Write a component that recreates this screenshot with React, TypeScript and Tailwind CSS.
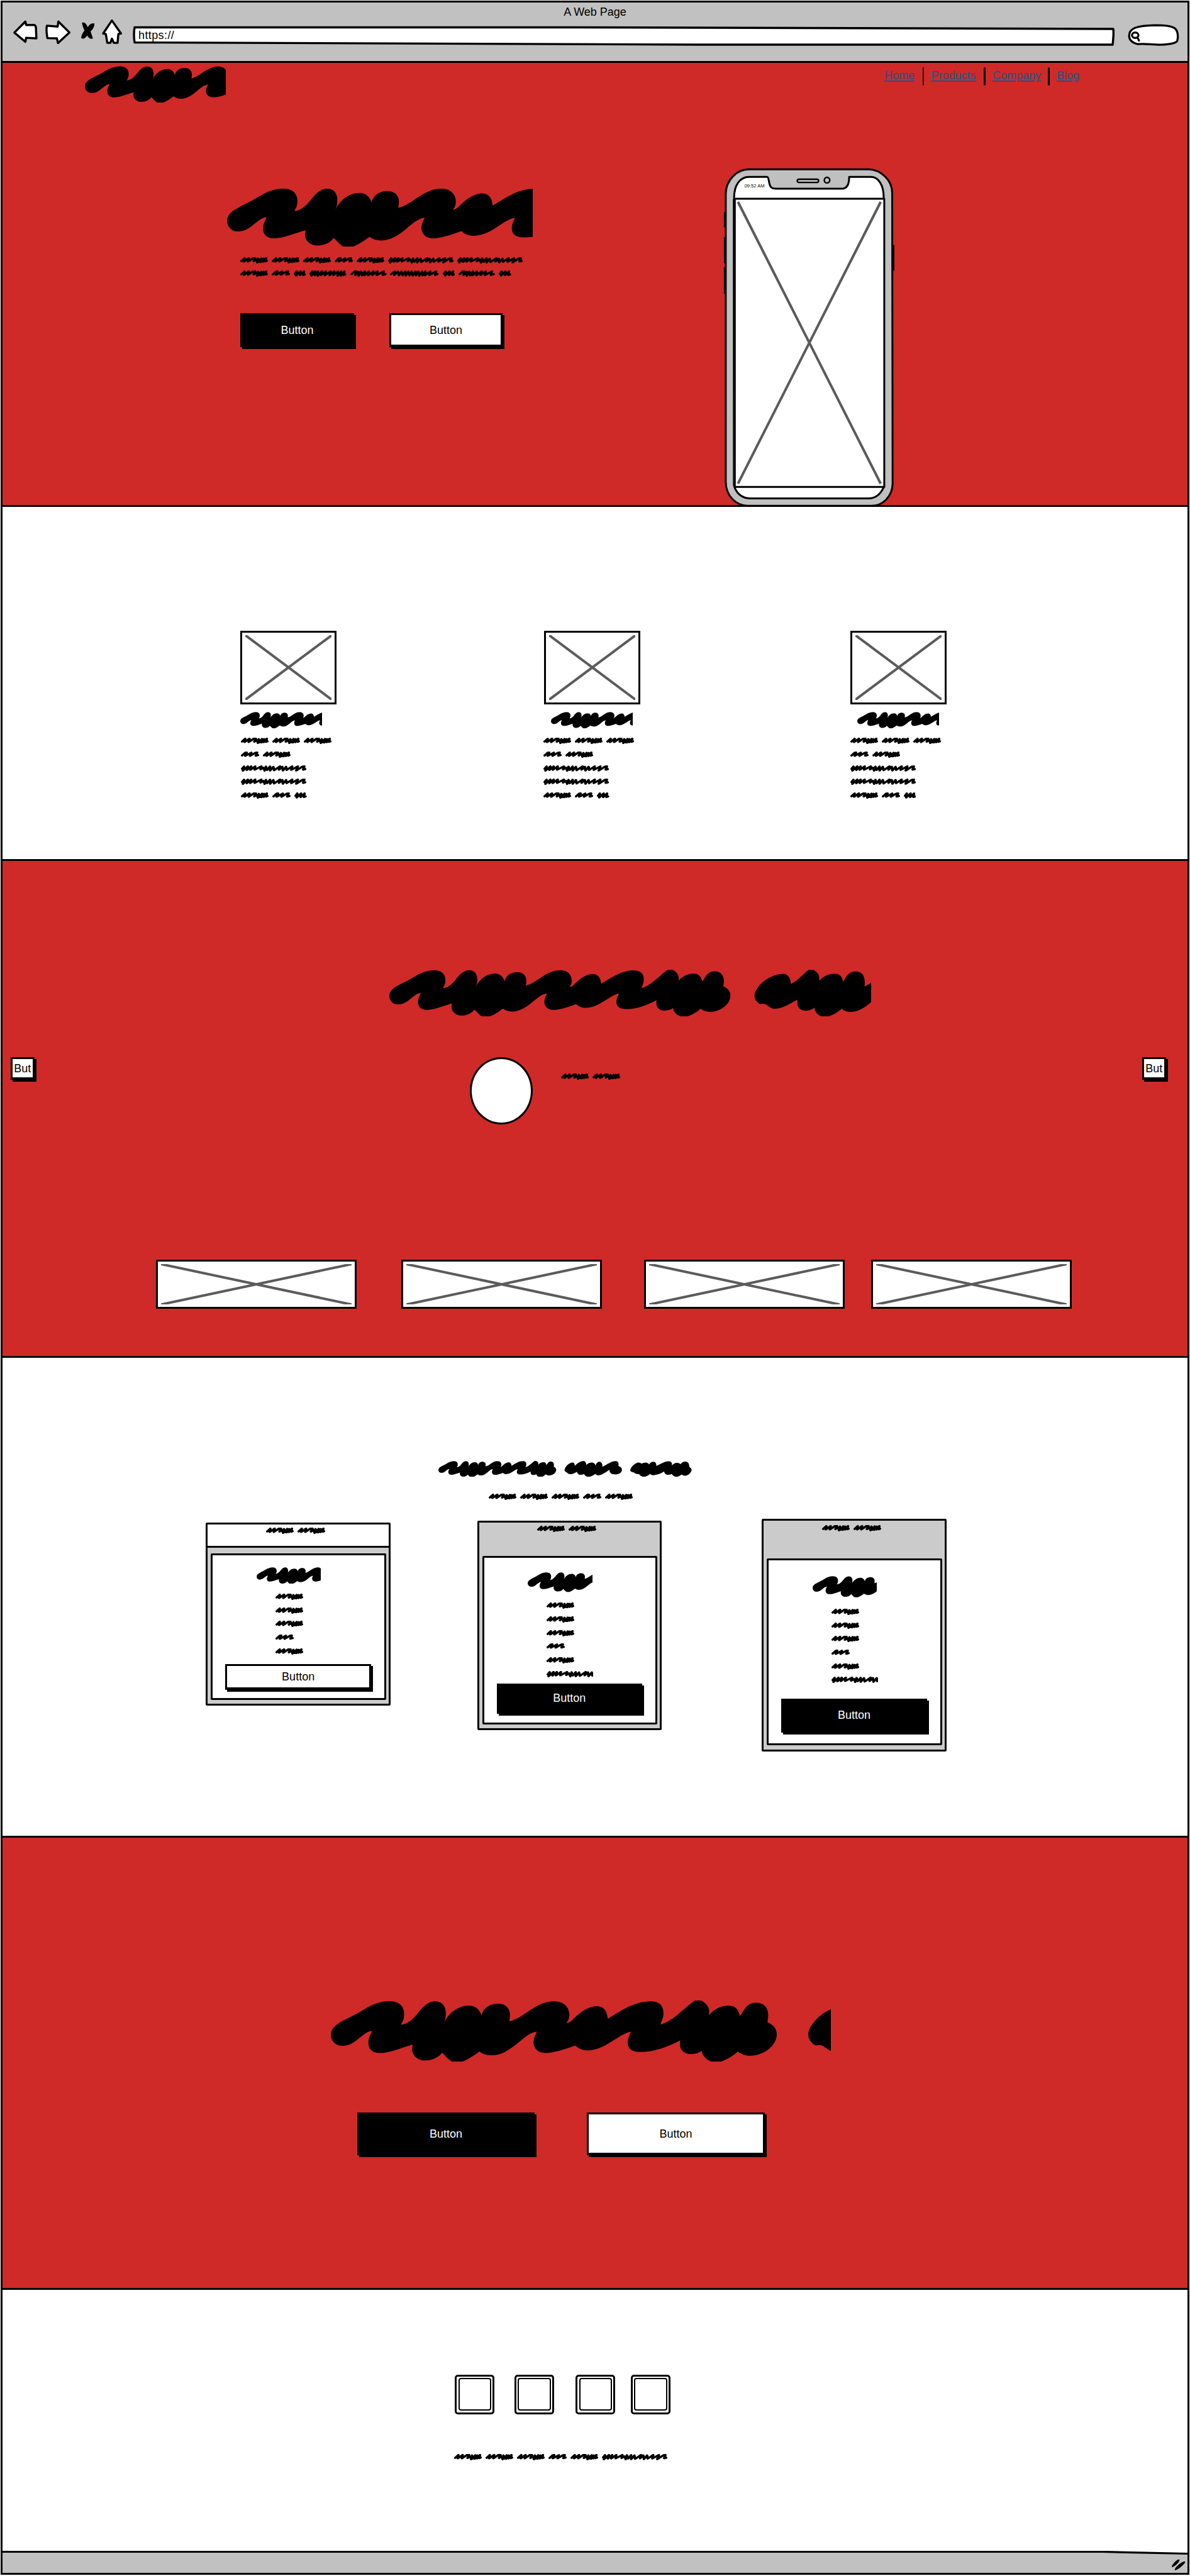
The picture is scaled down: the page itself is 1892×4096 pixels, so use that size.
import React from "react";

/* Long headline scribble, clipped on the right by its text box. */
const HEADLINE =
  "M33 345C33 300 50 270 75 240C90 222 110 200 130 170C155 132 180 112 205 112C240 112 248 165 248 200C248 235 244 255 238 275C255 275 270 245 285 205C300 160 315 113 340 113C360 113 370 150 370 195C370 230 367 250 364 270C375 200 405 143 438 143C458 143 470 175 475 215C478 160 500 130 523 130C548 130 558 170 558 205C558 225 557 240 556 252C580 240 600 200 620 170C645 132 665 113 688 113C720 113 732 165 732 205C732 235 728 252 723 264C735 266 742 235 758 205C775 170 795 147 812 147C835 147 842 185 845 235C865 205 885 175 905 152C930 125 950 114 970 114C1000 114 1008 155 1008 195C1008 230 1002 252 999 275C1025 258 1045 215 1065 175C1080 143 1092 120 1100 108L1118 108C1135 128 1142 155 1142 185L1141 210C1155 168 1178 143 1199 143C1220 143 1228 175 1232 216C1240 190 1245 165 1252 148C1260 128 1270 123 1280 123C1305 123 1315 165 1315 210C1315 230 1313 245 1313 260C1330 275 1340 305 1340 342C1340 425 1300 492 1262 492C1248 492 1235 480 1226 462C1210 495 1192 522 1174 534L1150 534C1132 520 1122 490 1120 458C1112 472 1100 480 1088 480C1065 480 1056 445 1056 410L1057 385C1020 432 980 466 940 466C912 466 903 435 903 400C903 370 909 345 913 324C895 330 875 365 855 395C830 433 808 455 786 455C770 455 758 440 749 421C715 450 685 473 662 473C638 473 627 435 627 398C627 370 633 345 637 324C615 330 598 370 580 405C555 455 530 489 505 489C490 489 478 480 468 462C450 495 430 525 416 534L390 534C378 522 370 495 359 470C350 503 330 525 310 525C285 525 271 485 271 445L273 414C235 440 205 473 177 473C150 473 143 435 143 400C143 370 149 345 154 319C138 320 120 365 105 390C92 413 80 423 66 423C45 423 33 385 33 345Z";

const HEADLINE_TAIL =
  "M1160 323C1160 260 1205 170 1246 170C1262 170 1269 200 1270 240C1290 220 1305 175 1324 142L1338 142C1350 158 1356 175 1356 200L1356 220C1366 188 1385 169 1402 169C1420 169 1426 195 1428 226C1436 200 1442 154 1466 154C1490 154 1496 195 1493 258C1500 252 1507 242 1513 232V366C1495 405 1472 435 1452 435C1440 435 1430 428 1424 413C1410 440 1395 460 1382 467L1364 467C1352 458 1342 435 1341 404C1335 418 1325 426 1314 426C1295 426 1287 395 1290 350C1265 380 1245 413 1221 413C1205 413 1198 376 1184 378L1177 381C1168 370 1160 350 1160 323Z";

function Headline({ span, className }: { span: number; className: string }) {
  return (
    <svg viewBox={`33 108 ${span} 426`} preserveAspectRatio="none" className={`block shrink-0 overflow-hidden ${className}`}>
      <path d={HEADLINE} />
      <path d={HEADLINE_TAIL} transform="translate(33 108) scale(1.2653 1.3108) translate(-54 -142)" />
    </svg>
  );
}

type WordKind = "A" | "B" | "C" | "D" | "E" | "F" | "G";

const WORDS: Record<WordKind, { x: number; y: number; w: number; d: string }> = {
  A: { x: 137, y: 684, w: 168, d: "M144 711L163 691L159 714L189 691L184 714L215 691L228 691L218 712L234 700L240 721L246 694L252 716L265 693L262 717L278 694L276 715L294 691L290 713L298 709" },
  B: { x: 708, y: 684, w: 111, d: "M715 712L734 692L743 691L734 714L771 692L763 714L797 692L807 691L798 713L812 709" },
  C: { x: 1031, y: 684, w: 397, d: "M1038 708L1050 692L1043 721L1073 691L1067 716L1093 691L1088 715L1118 691L1114 714L1155 691L1150 712L1168 700L1175 721L1183 693L1190 716L1208 692L1208 720L1228 694L1232 718L1268 691L1262 714L1282 694L1285 720L1305 694L1308 716L1342 691L1336 715L1376 691L1366 720L1405 692L1416 691L1408 714L1421 710" },
  D: { x: 0, y: 0, w: 75, d: "M7 24L18 7L14 36L41 7L38 32L62 7L58 32L68 28" },
  E: { x: 0, y: 0, w: 223, d: "M7 24L18 7L12 36L34 7L32 34L52 7L50 37L75 7L70 32L100 7L93 34L128 7L122 34L150 7L146 32L172 8L170 37L192 8L190 36L212 7L208 32L216 28" },
  F: { x: 0, y: 0, w: 220, d: "M7 26L28 7L36 7L30 32L50 10L50 37L66 8L70 34L88 7L84 34L112 8L108 34L140 7L133 32L165 7L160 32L202 7L196 31L213 26" },
  G: { x: 0, y: 0, w: 295, d: "M7 26L30 7L26 32L50 9L55 34L70 8L76 34L92 8L96 36L112 8L118 34L132 8L138 36L155 8L158 34L172 8L178 37L195 8L198 34L215 8L212 34L245 7L238 32L280 7L274 31L288 26" },
};

const WORD_WIDTH: Record<WordKind, string> = {
  A: "w-[44.1px]",
  B: "w-[29.1px]",
  C: "w-[104.2px]",
  D: "w-[19.7px]",
  E: "w-[58.5px]",
  F: "w-[57.8px]",
  G: "w-[77.4px]",
};

function Line({ words }: { words: string }) {
  return (
    <div className="flex h-[10px] gap-[5.9px]">
      {words.split("").map((k, i) => {
        const word = WORDS[k as WordKind];
        return (
          <svg key={i} viewBox={`${word.x} ${word.y} ${word.w} 44`} preserveAspectRatio="none" className={`block h-[10px] shrink-0 ${WORD_WIDTH[k as WordKind]}`}>
            <path d={word.d} fill="none" stroke="#000" strokeWidth="14.5" strokeLinecap="round" strokeLinejoin="round" />
          </svg>
        );
      })}
    </div>
  );
}

function Lines({ rows, className = "" }: { rows: string[]; className?: string }) {
  return (
    <div className={`flex flex-col gap-[11.7px] ${className}`}>
      {rows.map((r, i) => (
        <Line key={i} words={r} />
      ))}
    </div>
  );
}

function Button({ dark = false, className, label = "Button" }: { dark?: boolean; className: string; label?: string }) {
  return (
    <button
      className={`flex shrink-0 items-center justify-center border-[3px] border-b-4 border-black text-[18px] leading-none shadow-[3px_3px_0_0_#000] ${dark ? "bg-black text-white" : "bg-white text-black"} ${className}`}
    >
      {label}
    </button>
  );
}

function Placeholder({ className }: { className: string }) {
  return (
    <div className={`shrink-0 border-[3px] border-black bg-white px-[5px] py-[4px] ${className}`}>
      <svg viewBox="0 0 100 100" preserveAspectRatio="none" className="block h-full w-full">
        <path d="M0 0L100 100M100 0L0 100" fill="none" stroke="#5b5b5b" strokeWidth="4" vectorEffect="non-scaling-stroke" />
      </svg>
    </div>
  );
}

function BrowserBar() {
  return (
    <header className="h-[96px] shrink-0 border-b-[3px] border-black bg-[#c1c1c1]">
      <div className="h-[26px] text-center text-[18px] leading-[30px]">A Web Page</div>
      <div className="flex items-start">
        <svg viewBox="30 135 295 170" preserveAspectRatio="none" className="mt-[1px] ml-[14px] h-[39px] w-[178px] shrink-0">
          <g fill="#fff" stroke="#000" strokeWidth="3.4" strokeLinejoin="round">
            <path vectorEffect="non-scaling-stroke" d="M38 226L67 149L69 173L90 173Q95 175 95 200L96 266L69 262L67 290Z" />
            <path vectorEffect="non-scaling-stroke" d="M183 225L154 149L152 184L124 178Q121 200 125 264L150 266L153 298Z" />
            <path vectorEffect="non-scaling-stroke" d="M295 142L272 232L279 236L283 297L291 297L295 268L300 297L310 297L312 236L319 232Z" />
          </g>
          <path d="M216 158Q223 150 229 175Q232 196 238 212Q242 240 245 266Q238 276 231 250Q220 210 216 158Z" />
          <path d="M249 163Q242 156 236 172Q228 200 224 208Q215 235 214 262Q220 276 227 256Q234 230 241 212Q249 190 249 163Z" />
        </svg>
        <div className="relative mt-[12px] ml-[15px] h-[30px] w-[1561px] shrink-0 pl-[9px] text-[18px] leading-[28px] tracking-[0.4px]">
          <svg viewBox="0 0 1561 30" className="absolute inset-0 h-[30px] w-[1561px] overflow-visible">
            <path d="M3 1.5L700 1.5Q1200 2 1559 4Q1560 12 1558 29L900 29Q400 28 3 25.5Q1 13 3 1.5Z" fill="#fff" stroke="#000" strokeWidth="3.4" strokeLinejoin="round" />
          </svg>
          <span className="relative">https://</span>
        </div>
        <svg viewBox="1400 168 142 155" preserveAspectRatio="none" className="mt-[8.4px] ml-[18.6px] h-[35.4px] w-[85.6px] shrink-0">
          <g stroke="#000" strokeWidth="3.2" strokeLinecap="round">
            <path vectorEffect="non-scaling-stroke" fill="#fff" d="M1475 177C1425 180 1407 200 1407 250C1407 280 1415 300 1430 309C1450 303 1465 313 1490 313C1515 311 1532 300 1534 285C1537 260 1536 215 1527 198C1520 183 1505 177 1475 177Z" />
            <ellipse vectorEffect="non-scaling-stroke" fill="#fff" cx="1423" cy="247" rx="8.5" ry="19" />
            <path vectorEffect="non-scaling-stroke" d="M1430 268L1433 284" />
          </g>
        </svg>
      </div>
    </header>
  );
}

function Phone() {
  return (
    <div className="relative z-10 mt-[104.2px] ml-[289.4px] h-[539.5px] w-[273.3px] shrink-0">
      <svg viewBox="110 55 1195 1468" preserveAspectRatio="none" className="block h-full w-full">
        <path d="M116 249H130V310H116ZM116 357H130V465H116ZM116 487H130V597H116ZM1282 391H1297V497H1282Z" stroke="#000" strokeWidth="4" />
        <g stroke="#000" strokeWidth="3" strokeLinejoin="round">
          <path vectorEffect="non-scaling-stroke" fill="#c0c0c0" d="M127 165C130 110 200 60 290 61L1120 61C1200 62 1285 105 1284 165L1287 1420C1285 1480 1215 1517 1140 1517L280 1517C195 1515 130 1475 127 1415Z" />
          <path vectorEffect="non-scaling-stroke" fill="#fff" d="M185 185C185 130 225 94 290 94L415 94C428 94 425 125 440 137Q450 145 480 145L935 145C965 145 985 130 985 94L1135 94C1190 94 1225 130 1225 183V1437C1200 1470 1160 1485 1120 1485H300C250 1485 210 1470 188 1437Z" />
          <path vectorEffect="non-scaling-stroke" fill="#fff" d="M190 188H1229V1435H190Z" />
          <path vectorEffect="non-scaling-stroke" strokeWidth="2.4" fill="#c0c0c0" d="M635 104H762Q774 105 772 112Q770 118 758 118H635Q624 117 624 111Q624 105 635 104Z" />
          <ellipse vectorEffect="non-scaling-stroke" strokeWidth="2.4" fill="#c0c0c0" cx="831" cy="108" rx="19" ry="12" />
        </g>
        <path vectorEffect="non-scaling-stroke" d="M179 190V1432" stroke="#000" strokeWidth="1" />
        <path vectorEffect="non-scaling-stroke" d="M212 202L1204 1421M1204 202L212 1421" stroke="#5b5b5b" strokeWidth="4" />
      </svg>
      <span className="absolute top-[24px] left-[33.5px] text-[7.5px] leading-[10px] whitespace-nowrap">09:52 AM</span>
    </div>
  );
}

const LINKS = [
  { label: "Home", width: "w-[49px]" },
  { label: "Products", width: "w-[72px]" },
  { label: "Company", width: "w-[76.5px]" },
  { label: "Blog", width: "w-[37.5px]" },
];

function Hero() {
  return (
    <section className="h-[706px] shrink-0 border-b-[3px] border-black bg-[#cf2a27]">
      <div className="flex h-[63px] items-start">
        <Headline span={691.6} className="mt-[5px] ml-[131px] h-[58.2px] w-[224px]" />
        <nav className="mt-[7px] ml-[1047px] flex h-[29px] items-center gap-[11.5px]">
          {LINKS.map((l, i) => (
            <React.Fragment key={l.label}>
              {i > 0 && <span className="h-[29px] w-[2.5px] rounded-full bg-black" />}
              <a className={`${l.width} -mt-[3px] text-[18px] leading-[20px] whitespace-nowrap text-[#10598f] underline decoration-2 underline-offset-[2px]`}>{l.label}</a>
            </React.Fragment>
          ))}
        </nav>
      </div>
      <div className="flex items-start">
        <div className="mt-[135.7px] ml-[356.8px] w-[500px] shrink-0">
          <Headline span={934} className="h-[93.4px] w-[486px]" />
          <Lines rows={["AAABACC", "ABDEFGDFD"]} className="mt-[16.6px] ml-[21px]" />
          <div className="mt-[57.8px] ml-[21.5px] flex gap-[56px]">
            <Button dark className="h-[54px] w-[180.5px]" />
            <Button className="h-[54px] w-[180.5px]" />
          </div>
        </div>
        <Phone />
      </div>
    </section>
  );
}

function Feature({ title, text, className }: { title: string; text: string; className: string }) {
  return (
    <div className={`w-[154px] shrink-0 ${className}`}>
      <Placeholder className="h-[116.6px] w-[153.6px]" />
      <Headline span={901} className={`mt-[12.5px] h-[26px] w-[130px] ${title}`} />
      <Lines rows={["AAA", "BA", "C", "C", "ABD"]} className={`mt-[15.2px] ${text}`} />
    </div>
  );
}

function Features() {
  return (
    <section className="flex h-[563px] shrink-0 items-start border-b-[3px] border-black bg-white pt-[197px]">
      <Feature title="" text="ml-[1.3px]" className="ml-[377.7px]" />
      <Feature title="ml-[11px]" text="-ml-[0.5px]" className="ml-[329px]" />
      <Feature title="ml-[11px]" text="" className="ml-[333px]" />
    </section>
  );
}

function Testimonials() {
  return (
    <section className="h-[790px] shrink-0 border-b-[3px] border-black bg-[#cf2a27] pt-[172.7px]">
      <Headline span={1846} className="ml-[614.6px] h-[74.4px] w-[766px]" />
      <div className="mt-[64.9px] flex items-start">
        <Button label="But" className="ml-[13px] h-[36.5px] w-[37.5px]" />
        <div className="ml-[692px] h-[106.8px] w-[100.3px] shrink-0 rounded-[50%] border-[3px] border-black bg-white" />
        <div className="mt-[25.8px] ml-[45px]">
          <Line words="AA" />
        </div>
        <Button label="But" className="mr-[34.5px] ml-auto h-[36.5px] w-[37.5px]" />
      </div>
      <div className="mt-[215.2px] ml-[244px] flex">
        <Placeholder className="h-[78.3px] w-[319px]" />
        <Placeholder className="ml-[70.5px] h-[78.3px] w-[319px]" />
        <Placeholder className="ml-[67.5px] h-[78.3px] w-[319px]" />
        <Placeholder className="ml-[41.5px] h-[78.3px] w-[319px]" />
      </div>
    </section>
  );
}

function PlanBody({ span, title, rows, list, button, dark = false }: { span: number; title: string; rows: string[]; list: string; button: string; dark?: boolean }) {
  return (
    <>
      <Headline span={span} className={`ml-[69.5px] w-[102.6px] ${title}`} />
      <Lines rows={rows} className={`ml-[99.6px] w-[74px] overflow-hidden ${list}`} />
      <Button dark={dark} className={`ml-[20px] w-[231.5px] ${button}`} />
    </>
  );
}

function Pricing() {
  return (
    <section className="h-[763px] shrink-0 border-b-[3px] border-black bg-white pt-[163.8px]">
      <svg viewBox="753 82 767 84" preserveAspectRatio="none" className="ml-[693.2px] block h-[25.7px] w-[402.6px]">
        <path d={HEADLINE} transform="translate(753 82) scale(0.2731 0.1972) translate(-33 -108)" />
        <path d="M1135 129C1137 112 1148 90 1160 90Q1166 92 1166 107Q1180 82 1194 82Q1201 88 1201 103Q1208 90 1218 90Q1226 90 1229 105Q1233 86 1241 86Q1250 88 1250 112C1262 104 1275 83 1290 83C1299 83 1300 98 1298 108C1306 112 1309 120 1309 128C1309 143 1300 152 1290 152C1277 152 1271 145 1271 128C1262 138 1248 157 1238 157Q1231 157 1228 150Q1216 165 1208 165Q1198 165 1194 150Q1189 155 1181 154Q1174 150 1173 138Q1160 151 1152 151Q1145 150 1142 142Q1135 138 1135 129Z" />
        <path d="M1334 129C1337 112 1349 90 1360 90Q1366 91 1368 96Q1375 90 1382 90Q1389 92 1391 100Q1396 86 1405 86Q1414 88 1413 108C1425 100 1438 84 1450 84C1460 84 1462 98 1460 107Q1467 92 1475 92Q1482 92 1487 98Q1492 84 1503 85Q1513 87 1513 113Q1520 120 1520 130C1518 147 1507 159 1499 159Q1493 158 1490 152Q1480 165 1473 165Q1463 162 1460 150Q1454 155 1446 154Q1437 150 1437 137Q1420 155 1404 156Q1396 155 1395 149Q1384 165 1375 165Q1364 162 1361 150Q1350 152 1345 142Q1334 140 1334 129Z" />
      </svg>
      <div className="mt-[26.5px] ml-[773px]">
        <Line words="AAABA" />
      </div>
      <div className="mt-[29.7px] flex items-start">
        <article className="mt-[5.9px] ml-[323px] h-[291px] w-[293.5px] shrink-0 rounded-[2px] border-[3px] border-black bg-[#cbcbcb]">
          <div className="h-[37.5px] border-b-[3px] border-black bg-white pt-[5.5px] pl-[93px]">
            <Line words="AA" />
          </div>
          <div className="mt-[9px] ml-[5.4px] h-[233px] w-[278.3px] rounded-[2px] border-[3px] border-black bg-white">
            <PlanBody span={691} title="mt-[18.8px] h-[26.6px]" rows={["A", "A", "A", "B", "A"]} list="mt-[15.6px]" button="mt-[15px] h-[41px]" />
          </div>
        </article>
        <article className="mt-[3.1px] ml-[138px] h-[333.3px] w-[293.5px] shrink-0 rounded-[2px] border-[3px] border-black bg-[#cbcbcb]">
          <div className="h-[53.4px] pt-[5.4px] pl-[92.8px]">
            <Line words="AA" />
          </div>
          <div className="ml-[5px] h-[267.4px] w-[278.5px] rounded-[2px] border-[3px] border-black bg-white">
            <PlanBody dark span={592} title="mt-[23.3px] h-[31.2px]" rows={["A", "A", "A", "B", "A", "C"]} list="mt-[16.6px]" button="mt-[10px] h-[48.5px]" />
          </div>
        </article>
        <article className="ml-[159.4px] h-[370px] w-[294px] shrink-0 rounded-[2px] border-[3px] border-black bg-[#cbcbcb]">
          <div className="h-[60.8px] pt-[7px] pl-[93px]">
            <Line words="AA" />
          </div>
          <div className="ml-[4.8px] h-[296.4px] w-[279.2px] rounded-[2px] border-[3px] border-black bg-white">
            <PlanBody dark span={546} title="mt-[24.6px] h-[33.7px]" rows={["A", "A", "A", "B", "A", "C"]} list="mt-[18.1px]" button="mt-[24.8px] h-[53.7px]" />
          </div>
        </article>
      </div>
    </section>
  );
}

function CallToAction() {
  return (
    <section className="h-[719px] shrink-0 border-b-[3px] border-black bg-[#cf2a27] pt-[259px]">
      <Headline span={1467} className="ml-[521.6px] h-[97.4px] w-[795.8px]" />
      <div className="mt-[81px] ml-[563.6px] flex gap-[83px]">
        <Button dark className="h-[68px] w-[282.7px]" />
        <Button className="h-[68px] w-[282.7px]" />
      </div>
    </section>
  );
}

function SocialIcon({ className = "" }: { className?: string }) {
  return (
    <div className={`h-[63px] w-[63.3px] shrink-0 rounded-[5px] border-[3px] border-black bg-white p-[2.5px] ${className}`}>
      <div className="h-full w-full rounded-[4px] border-2 border-black" />
    </div>
  );
}

function Social() {
  return (
    <section className="flex-1 bg-white pt-[134.7px]">
      <div className="ml-[719px] flex">
        <SocialIcon />
        <SocialIcon className="ml-[31.5px]" />
        <SocialIcon className="ml-[34.1px]" />
        <SocialIcon className="ml-[24.3px]" />
      </div>
      <div className="mt-[63.6px] ml-[718px]">
        <Line words="AAABAC" />
      </div>
    </section>
  );
}

function StatusBar() {
  return (
    <footer className="relative flex h-[35px] shrink-0 items-start justify-end bg-[#c1c1c1]">
      <svg viewBox="0 0 1884 8" preserveAspectRatio="none" className="absolute top-0 left-0 h-[8px] w-full">
        <path d="M0 0H1884V4L1700 1.5H0Z" fill="#fff" />
        <path d="M0 1.5H1750L1884 4.5" fill="none" stroke="#000" strokeWidth="3.2" />
      </svg>
      <svg viewBox="460 150 105 90" className="mt-[12px] mr-[2.5px] h-[20.6px] w-[24px]">
        <path d="M466 212Q462 200 480 182Q500 158 516 157Q524 162 508 182Q488 205 466 212ZM486 233Q482 220 505 200Q535 172 555 171Q564 175 545 194Q515 226 486 233Z" />
      </svg>
    </footer>
  );
}

export default function App() {
  return (
    <div className="h-[4096px] w-[1892px] overflow-hidden bg-white p-px font-['Liberation_Sans',Arial,sans-serif] text-black">
      <div className="flex h-[4093px] w-[1890px] flex-col border-[3px] border-black bg-white">
        <BrowserBar />
        <Hero />
        <Features />
        <Testimonials />
        <Pricing />
        <CallToAction />
        <Social />
        <StatusBar />
      </div>
    </div>
  );
}
